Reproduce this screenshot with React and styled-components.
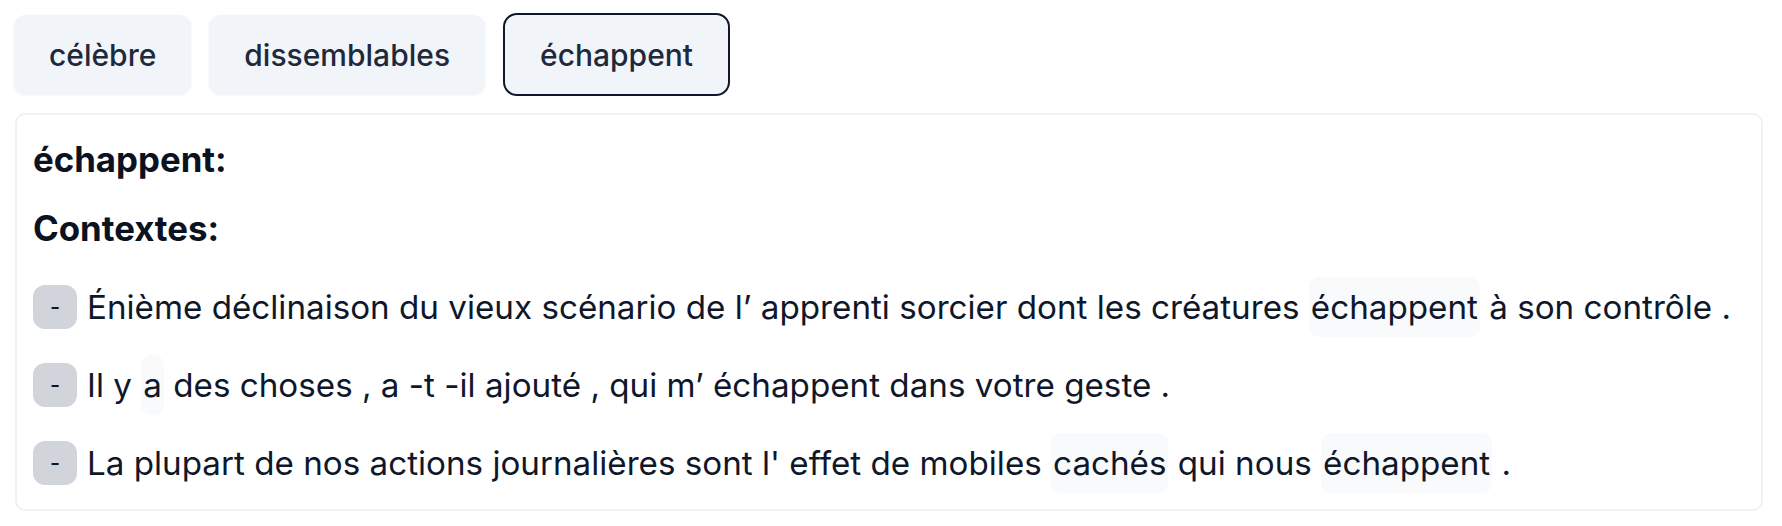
import React from 'react';
import styled, { createGlobalStyle } from 'styled-components';

const GlobalStyle = createGlobalStyle`
    html, body {
        margin: 0;
        padding: 0;
        background: #ffffff;
        font-family: Inter, "Noto Sans", sans-serif;
        color: #0f172a;
    }
`;

const Page = styled.div`
    padding: 13px 19px 0 14px;
    display: flex;
    flex-direction: column;
    gap: 17px;
`;

const WordBar = styled.div`
    display: flex;
    align-items: center;
    gap: 18px;
`;

const WordButton = styled.button`
    font-family: Inter, sans-serif;
    font-size: 30px;
    font-weight: 500;
    line-height: 42px;
    color: #1e293b;
    background: #f1f5f9;
    padding: 18.5px 35px;
    border: ${(p) => (p.$active ? '2px solid #0f172a' : 'none')};
    border-radius: ${(p) => (p.$active ? '14px' : '12px')};
    box-shadow: ${(p) => (p.$active ? 'none' : '0 1px 3px rgba(15, 23, 42, 0.07)')};
    cursor: pointer;
`;

const Card = styled.div`
    margin-left: 1px;
    border: 2px solid #eef2f6;
    border-radius: 10px;
    padding: 23px 16px 24px 16px;
    display: flex;
    flex-direction: column;
`;

const Heading = styled.div`
    font-size: 34.8px;
    font-weight: 700;
    line-height: 42px;
    color: #0b1222;
    margin-bottom: ${(p) => p.$gap}px;
`;

const ContextList = styled.div`
    display: flex;
    flex-direction: column;
    gap: 34px;
`;

const ContextRow = styled.div`
    display: flex;
    align-items: center;
    gap: 10px;
`;

const Chip = styled.span`
    flex: none;
    width: 44px;
    height: 44px;
    border-radius: 12px;
    background: #d1d5db;
    display: flex;
    align-items: center;
    justify-content: center;
    font-size: 22px;
    font-weight: 500;
    color: #111827;
`;

const Sentence = styled.p`
    margin: 0;
    font-size: 33.2px;
    line-height: 42px;
    color: #0f172a;
    white-space: nowrap;
`;

const Mark = styled.span`
    background: #f8fafc;
    border-radius: 10px;
    padding: 10px 2px;
`;

const words = [
    { label: 'célèbre' },
    { label: 'dissemblables' },
    { label: 'échappent', active: true },
];

const contexts = [
    [
        { t: 'Énième déclinaison du vieux scénario de l’ apprenti sorcier dont les créatures ' },
        { t: 'échappent', hl: true },
        { t: ' à son contrôle .' },
    ],
    [
        { t: 'Il y ' },
        { t: 'a', hl: true },
        { t: ' des choses , a -t -il ajouté , qui m’ échappent dans votre geste .' },
    ],
    [
        { t: "La plupart de nos actions journalières sont l' effet de mobiles " },
        { t: 'cachés', hl: true },
        { t: ' qui nous ' },
        { t: 'échappent', hl: true },
        { t: ' .' },
    ],
];

const App = () => {
    return (
        <>
            <GlobalStyle />
            <Page>
                <WordBar>
                    {words.map((w) => (
                        <WordButton key={w.label} $active={w.active}>{w.label}</WordButton>
                    ))}
                </WordBar>
                <Card>
                    <Heading $gap={27}>échappent:</Heading>
                    <Heading $gap={36}>Contextes:</Heading>
                    <ContextList>
                        {contexts.map((parts, i) => (
                            <ContextRow key={i}>
                                <Chip>-</Chip>
                                <Sentence>
                                    {parts.map((p, j) =>
                                        p.hl ? <Mark key={j}>{p.t}</Mark> : <React.Fragment key={j}>{p.t}</React.Fragment>
                                    )}
                                </Sentence>
                            </ContextRow>
                        ))}
                    </ContextList>
                </Card>
            </Page>
        </>
    );
};

export default App;
